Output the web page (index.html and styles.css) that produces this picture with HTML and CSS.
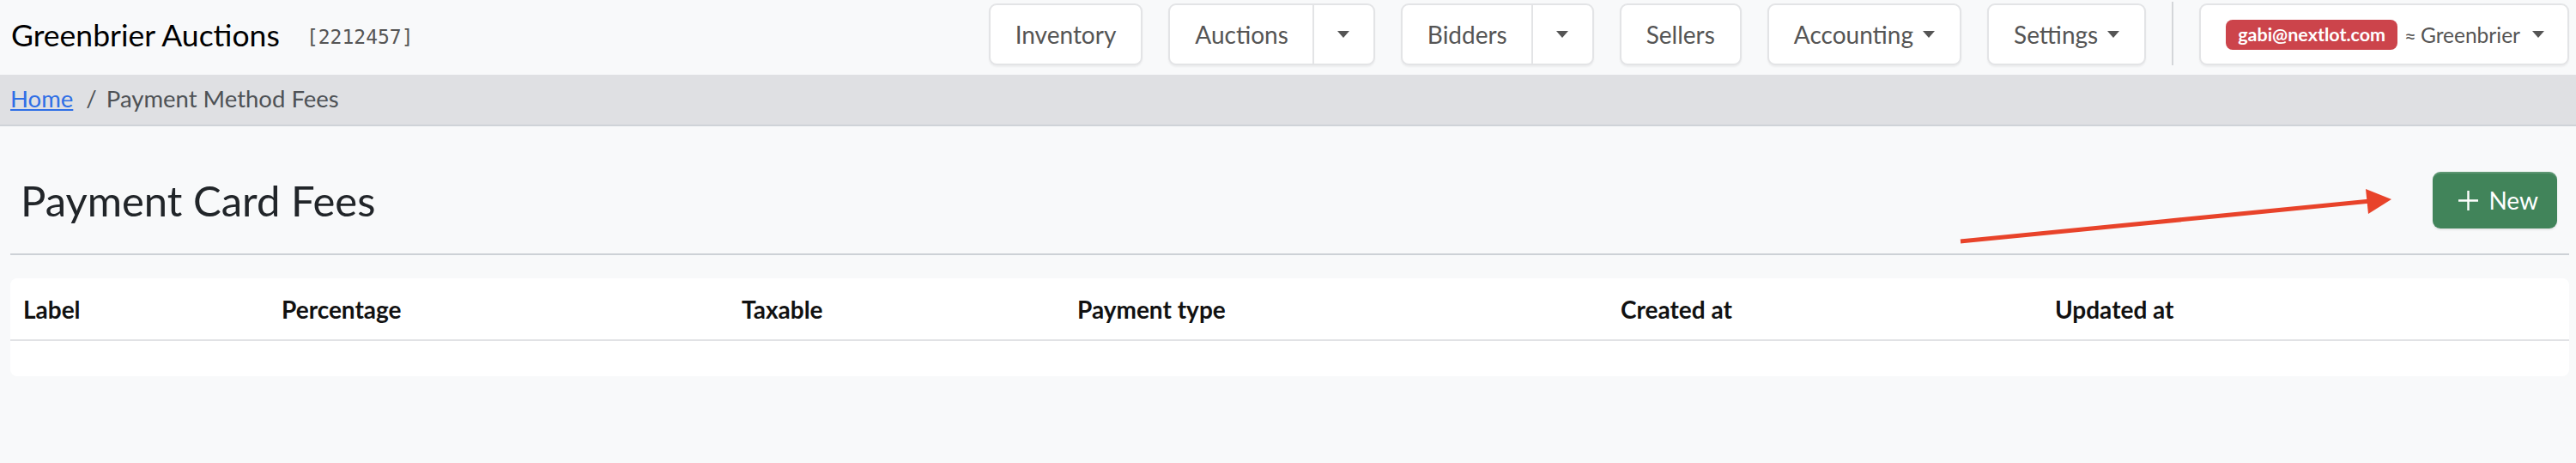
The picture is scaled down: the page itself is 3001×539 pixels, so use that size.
FILE: index.html
```html
<!DOCTYPE html>
<html lang="en">
<head>
    <meta charset="UTF-8">
    <meta name="viewport" content="width=device-width, initial-scale=1.0">
    <title>Payment Method Fees</title>
    <link rel="stylesheet" href="styles.css">
</head>
<body>
    <header class="topbar">
        <div class="brand">Greenbrier Auctions <span class="brand-id">[2212457]</span></div>
        <nav class="topnav">
            <a class="nav-btn" href="#">Inventory</a>
            <div class="btn-split">
                <a class="split-main" href="#">Auctions</a>
                <a class="split-caret" href="#"><span class="caret"></span></a>
            </div>
            <div class="btn-split">
                <a class="split-main" href="#">Bidders</a>
                <a class="split-caret" href="#"><span class="caret"></span></a>
            </div>
            <a class="nav-btn" href="#">Sellers</a>
            <a class="nav-btn" href="#">Accounting <span class="caret"></span></a>
            <a class="nav-btn" href="#">Settings <span class="caret"></span></a>
            <span class="nav-divider"></span>
            <a class="nav-btn user-btn" href="#">
                <span class="user-badge">gabi@nextlot.com</span>
                <span class="approx">&asymp;</span>
                <span>Greenbrier</span>
                <span class="caret"></span>
            </a>
        </nav>
    </header>

    <div class="crumbs">
        <a href="#">Home</a>
        <span class="crumb-sep">/</span>
        <span class="crumb-current">Payment Method Fees</span>
    </div>

    <main class="page">
        <div class="page-head">
            <h1>Payment Card Fees</h1>
            <a class="btn-new" href="#">
                <svg width="25" height="25" viewBox="0 0 25 25"><path d="M12.5 1v23M1 12.5h23" stroke="#fff" stroke-width="2.4" fill="none"/></svg>
                New
            </a>
        </div>
        <hr class="rule">

        <div class="card">
            <table class="fees">
                <colgroup>
                    <col style="width: 301px">
                    <col style="width: 536px">
                    <col style="width: 391px">
                    <col style="width: 633px">
                    <col style="width: 506px">
                    <col>
                </colgroup>
                <thead>
                    <tr>
                        <th>Label</th>
                        <th>Percentage</th>
                        <th>Taxable</th>
                        <th>Payment type</th>
                        <th>Created at</th>
                        <th>Updated at</th>
                    </tr>
                </thead>
                <tbody>
                    <tr class="empty-row"><td colspan="6"></td></tr>
                </tbody>
            </table>
        </div>
    </main>

    <!-- red annotation arrow pointing at the New button -->
    <svg class="annotation" width="3001" height="539" viewBox="0 0 3001 539">
        <line x1="2284" y1="281" x2="2762" y2="234" stroke="#e8432a" stroke-width="5"/>
        <polygon points="2756,220 2786,232 2759,249" fill="#e8432a"/>
    </svg>
</body>
</html>
```

FILE: styles.css
```css
body {
    margin: 0;
    background-color: #f8f9fa;
    font-family: Lato, "Open Sans", sans-serif;
    color: #212529;
    position: relative;
    min-height: 539px;
}
a {
    text-decoration: none;
}

/* top bar */
.topbar {
    display: flex;
    align-items: center;
    height: 87px;
    box-sizing: border-box;
    padding: 4px 8px 11px 13px;
}
.brand {
    font-size: 35.5px;
    color: #000;
    white-space: nowrap;
}
.brand-id {
    font-family: "DejaVu Sans Mono", monospace;
    font-size: 23px;
    color: #555;
    margin-left: 22px;
    position: relative;
    top: -3px;
}
.topnav {
    margin-left: auto;
    display: flex;
    align-items: center;
    gap: 30px;
}
.nav-btn,
.btn-split {
    height: 72px;
    box-sizing: border-box;
    border: 2px solid #e3e4e6;
    border-radius: 9px;
    background-color: #fff;
    box-shadow: 0 2px 2px rgba(0, 0, 0, 0.05);
}
.nav-btn {
    display: flex;
    align-items: center;
    padding: 0 29px;
    font-size: 28px;
    color: #555;
    white-space: nowrap;
}
.btn-split {
    display: flex;
}
.split-main {
    display: flex;
    align-items: center;
    padding: 0 28px 0 29px;
    font-size: 28px;
    color: #555;
}
.split-caret {
    display: flex;
    align-items: center;
    padding: 0 28px 0 27px;
    border-left: 2px solid #e3e4e6;
}
.caret {
    display: inline-block;
    width: 0;
    height: 0;
    border-top: 8px solid #555;
    border-left: 7px solid transparent;
    border-right: 7px solid transparent;
}
.nav-btn .caret {
    margin-left: 11px;
}
.nav-divider {
    width: 2px;
    height: 74px;
    background-color: #d4d6d9;
    margin-top: -2px;
}
.user-btn {
    font-size: 24.5px;
    padding-right: 27px;
}
.user-badge {
    flex-shrink: 0;
    background-color: #cc444b;
    color: #fff;
    font-weight: 700;
    font-size: 21.5px;
    line-height: 35px;
    padding: 0 14px;
    border-radius: 8px;
    margin-right: 8px;
}
.approx {
    font-size: 24px;
    margin-right: 5px;
}
.user-btn .caret {
    margin-left: 14px;
}

/* breadcrumb */
.crumbs {
    background-color: #dfe0e3;
    border-bottom: 2px solid #cfd3d8;
    height: 60px;
    box-sizing: border-box;
    padding: 11px 12px 0;
    font-size: 27.5px;
    color: #4e5256;
}
.crumbs a {
    color: #2f6fe6;
    text-decoration: underline;
}
.crumb-sep {
    padding: 0 4px 0 8px;
}

/* page content */
.page {
    padding: 53px 8px 0 12px;
}
.page-head {
    display: flex;
    justify-content: space-between;
    align-items: center;
    height: 66px;
}
.page-head h1 {
    margin: 0 0 0 12px;
    font-size: 49px;
    font-weight: 400;
    color: #212529;
}
.btn-new {
    display: flex;
    align-items: center;
    gap: 11px;
    height: 66px;
    box-sizing: border-box;
    padding: 0 22px 0 29px;
    margin-right: 14px;
    background-color: #41845a;
    border-radius: 9px;
    box-shadow: inset 0 2px 0 rgba(255, 255, 255, 0.15), 0 2px 2px rgba(0, 0, 0, 0.08);
    color: #fff;
    font-size: 28px;
}
.rule {
    margin: 29px 0 27px;
    border: 0;
    border-top: 2px solid #cdd1d6;
}
.card {
    background-color: #fff;
    border-radius: 8px;
    overflow: hidden;
}
.fees {
    width: 100%;
    table-layout: fixed;
    border-collapse: collapse;
}
.fees th {
    text-align: left;
    font-size: 28px;
    font-weight: 700;
    color: #111;
    height: 71px;
    padding: 0 15px;
    border-bottom: 2px solid #e1e2e5;
}
.empty-row td {
    height: 41px;
    padding: 0;
}

.annotation {
    position: absolute;
    left: 0;
    top: 0;
    pointer-events: none;
}
```
